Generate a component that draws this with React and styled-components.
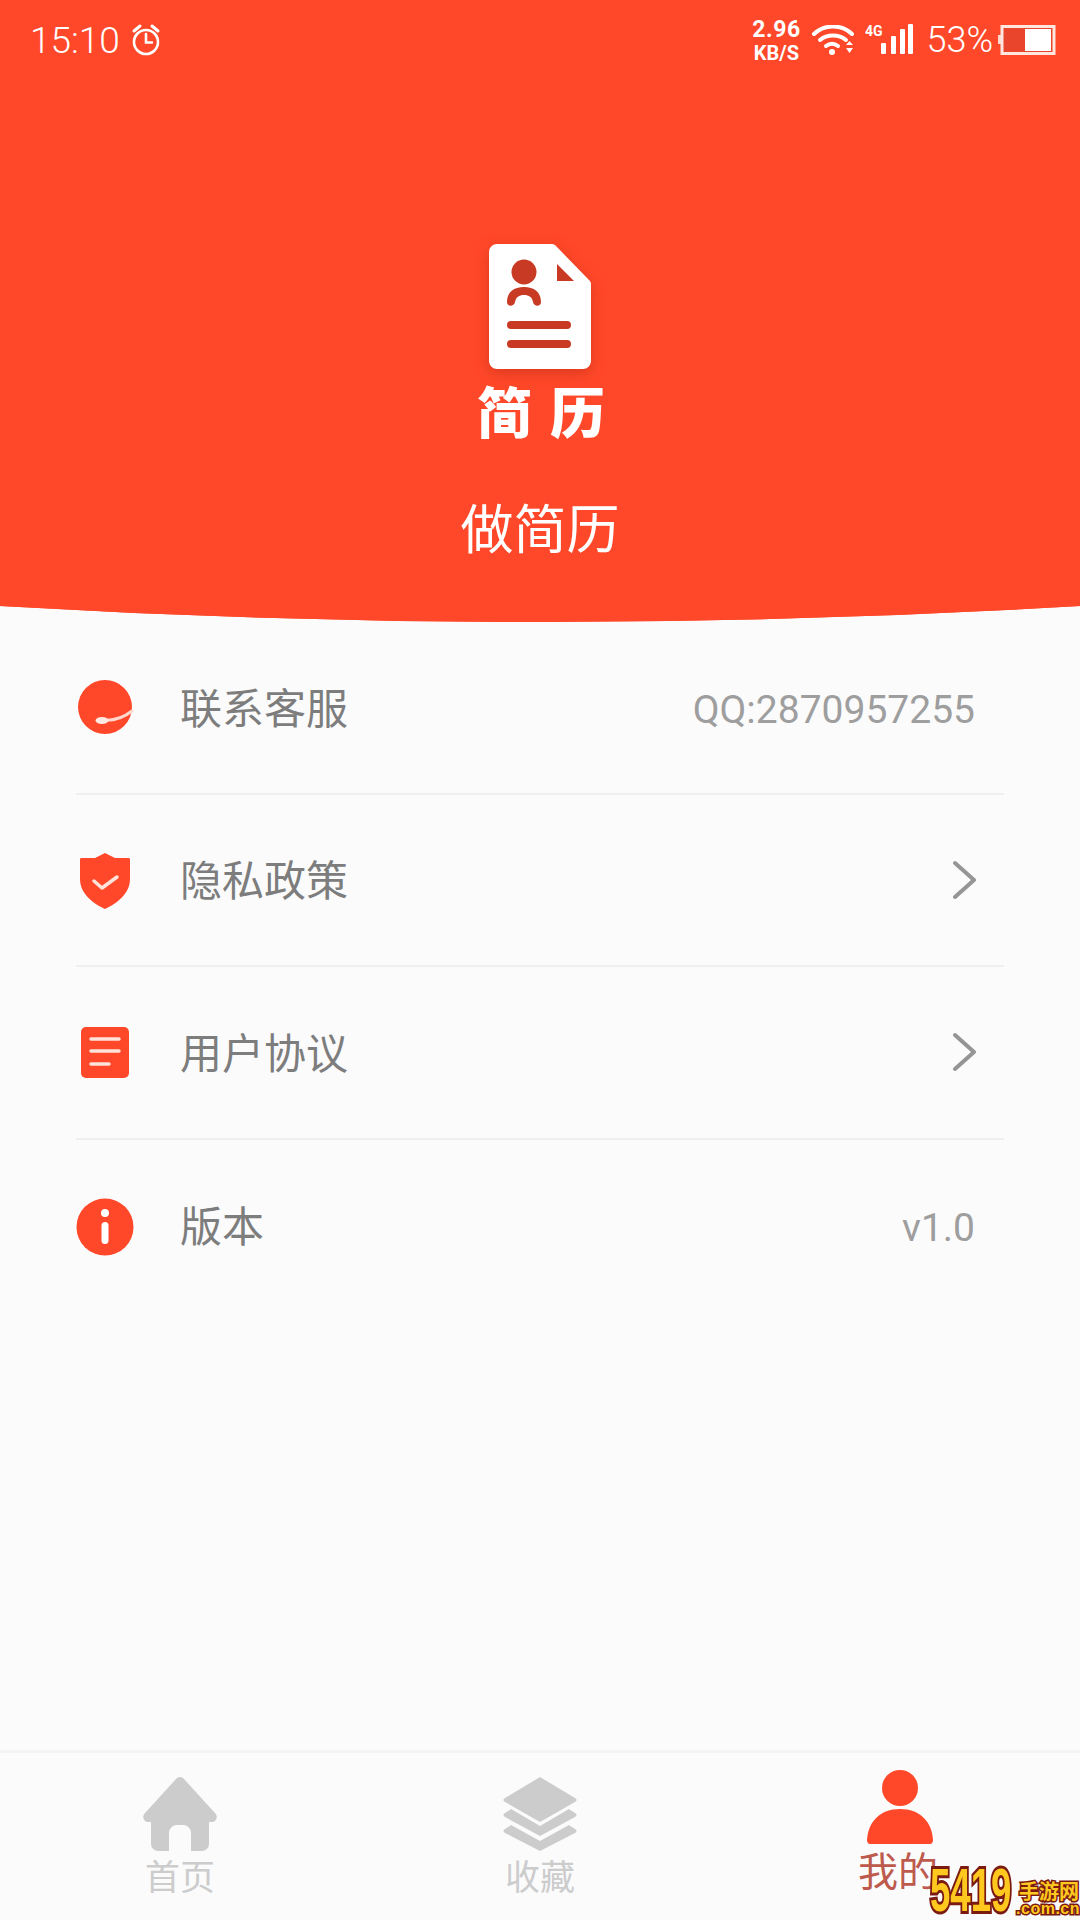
import React from "react";
import styled, { createGlobalStyle } from "styled-components";

const RED = "#ff4829";
const DARK = "#c93a25";

const GlobalStyle = createGlobalStyle`
  html, body { margin: 0; padding: 0; background: #fbfbfc; }
  * { box-sizing: border-box; }
`;

const Page = styled.div`
  position: relative;
  width: 1080px;
  height: 1920px;
  overflow: hidden;
  display: flex;
  flex-direction: column;
  background: #fbfbfc;
  font-family: "Noto Sans CJK SC", "Roboto", sans-serif;
`;

const Header = styled.header`
  position: relative;
  height: 622px;
  flex: none;
  display: flex;
  flex-direction: column;
  align-items: center;
  background: ${RED};
  color: #fff;
`;

const Curve = styled.svg`
  position: absolute;
  left: 0;
  bottom: 0;
  width: 1080px;
  height: 16px;
  display: block;
`;

const StatusBar = styled.div`
  width: 100%;
  height: 80px;
  padding: 0 24px 0 30px;
  display: flex;
  align-items: center;
  justify-content: space-between;
  font-family: "Roboto", sans-serif;
  font-weight: 300;
`;

const StatusGroup = styled.div`
  display: flex;
  align-items: center;
`;

const Clock = styled.span`
  font-size: 37px;
  margin-right: 11px;
`;

const Speed = styled.div`
  display: flex;
  flex-direction: column;
  align-items: center;
  gap: 3px;
  width: 48px;
  font-weight: 700;
  line-height: 1;
  margin-right: 11px;
`;

const SpeedValue = styled.span`
  font-size: 23px;
  line-height: 22px;
  letter-spacing: 0.5px;
`;

const SpeedUnit = styled.span`
  font-size: 20px;
  line-height: 18px;
`;

const Battery = styled.span`
  font-size: 36px;
  margin: 0 5px 0 11px;
`;

const Wifi = styled.svg`
  margin-right: 10px;
`;

const Logo = styled.svg`
  margin-top: 164px;
  filter: drop-shadow(0 4px 7px rgba(150, 30, 10, 0.35));
`;

const LogoName = styled.div`
  margin-top: 5px;
  padding-left: 20px;
  font-size: 55px;
  line-height: 70px;
  font-weight: 900;
  letter-spacing: 18px;
  font-family: "Noto Sans CJK SC", serif;
`;

const Title = styled.div`
  margin-top: 46px;
  font-size: 53px;
  line-height: 72px;
`;

const List = styled.div`
  flex: 1;
  padding: 0 76px;
`;

const Row = styled.div`
  height: 172.5px;
  display: flex;
  align-items: center;
  border-bottom: ${(p) => (p.$last ? "none" : "2px solid #efeff0")};
`;

const IconSlot = styled.div`
  width: 105px;
  flex: none;
  display: flex;
  justify-content: flex-start;
  margin-top: 2px;
`;

const Label = styled.span`
  flex: 1;
  font-size: 42px;
  color: #7d7d7d;
  line-height: 1;
  margin-top: -3px;
  margin-left: -1px;
`;

const Value = styled.span`
  font-family: "Roboto", sans-serif;
  font-size: 39px;
  color: #9e9e9e;
  margin-right: 29px;
  margin-top: 5px;
`;

const Arrow = styled.svg`
  margin-right: 28px;
`;

const TabBar = styled.nav`
  height: 170px;
  flex: none;
  display: grid;
  grid-template-columns: 360px 360px 360px;
  border-top: 3px solid #f4f4f5;
  background: #fbfbfc;
`;

const Tab = styled.div`
  display: flex;
  flex-direction: column;
  align-items: center;
  padding-top: ${(p) => (p.$active ? "17px" : "24px")};
  color: ${(p) => (p.$active ? "#bd5a4d" : "#cccccc")};
`;

const TabLabel = styled.span`
  font-size: ${(p) => (p.$active ? "40px" : "35px")};
  line-height: 44px;
  margin-top: ${(p) => (p.$active ? "3px" : "2px")};
  margin-right: ${(p) => (p.$active ? "4px" : "0")};
`;

const Watermark = styled.div`
  position: absolute;
  right: 0;
  bottom: 0;
  width: 152px;
  height: 68px;
  font-family: "Liberation Sans", sans-serif;
  color: #ffc81e;
`;

const WaterNumber = styled.span`
  position: absolute;
  left: 2px;
  top: 6px;
  font-size: 62px;
  font-weight: 700;
  line-height: 64px;
  transform: scaleX(0.59);
  transform-origin: left center;
  -webkit-text-stroke: 6px #7a1a10;
  paint-order: stroke fill;
`;

const WaterName = styled.span`
  position: absolute;
  right: 1px;
  top: 27px;
  font-family: "Noto Sans CJK SC", sans-serif;
  font-size: 20px;
  font-weight: 700;
  line-height: 24px;
  -webkit-text-stroke: 3px #7a1a10;
  paint-order: stroke fill;
`;

const WaterDomain = styled.span`
  position: absolute;
  right: 0;
  top: 46px;
  font-size: 16px;
  font-weight: 700;
  line-height: 22px;
  letter-spacing: 0.5px;
  -webkit-text-stroke: 3px #7a1a10;
  paint-order: stroke fill;
`;

const AlarmIcon = () => (
  <svg width="30" height="34" viewBox="0 0 30 34" fill="none" stroke="#fff" strokeWidth="2.6" strokeLinecap="round">
    <circle cx="15" cy="19" r="12" />
    <path d="M15 11v8.500h6" />
    <path d="M3 8l6-5M27 8l-6-5" strokeWidth="3" />
  </svg>
);

const WifiIcon = () => (
  <Wifi width="44" height="30" viewBox="0 0 44 30" fill="none" stroke="#fff" strokeLinecap="round">
    <path d="M3 9C13-1 31-1 41 9" strokeWidth="4" />
    <path d="M9 15c7-6 19-6 26 0" strokeWidth="4" />
    <path d="M15 21c4-3 8-3 12 0" strokeWidth="4" />
    <circle cx="21" cy="27" r="3" fill="#fff" stroke="none" />
    <path d="M35 20l3.500-4 3.500 4zM35 23h7l-3.500 5z" fill="#fff" stroke="none" />
  </Wifi>
);

const SignalIcon = () => (
  <svg width="50" height="32" viewBox="0 0 50 32">
    <text x="0" y="12" fill="#fff" fontFamily="Roboto, sans-serif" fontSize="14" fontWeight="700">4G</text>
    <rect x="16" y="19" width="5" height="11" rx="1" fill="#fff" />
    <rect x="26" y="12" width="5" height="18" rx="1" fill="#fff" />
    <rect x="35" y="5" width="5" height="25" rx="1" fill="#fff" />
    <rect x="43" y="0" width="5" height="30" rx="1" fill="#fff" />
  </svg>
);

const BatteryIcon = () => (
  <svg width="58" height="30" viewBox="0 0 58 30">
    <rect x="0" y="10" width="3" height="9" fill="#ffd9cf" />
    <rect x="4" y="1.500" width="52" height="27" fill="#e8452c" stroke="#ffe6df" strokeWidth="3" />
    <rect x="27" y="4" width="26" height="22" fill="#fff" />
  </svg>
);

const ResumeLogo = () => (
  <Logo width="102" height="125" viewBox="0 0 102 125">
    <path d="M8 0H63c2 0 3 1 4 2l33 34c1 1 2 2 2 4V117a8 8 0 0 1-8 8H8a8 8 0 0 1-8-8V8a8 8 0 0 1 8-8z" fill="#fff" />
    <path d="M68 20L85 37H68z" fill={DARK} />
    <circle cx="35" cy="28" r="12.500" fill={DARK} />
    <path d="M18 58c0-10 7-15 17-15s17 5 17 15c0 5-7 5-8 0-1-5-4-7-9-7s-8 2-9 7c-1 5-8 5-8 0z" fill={DARK} />
    <path d="M22 81H78M22 100H78" stroke={DARK} strokeWidth="8" strokeLinecap="round" />
  </Logo>
);

const ServiceIcon = () => (
  <svg width="58" height="58" viewBox="0 0 58 58">
    <circle cx="29" cy="28" r="27" fill={RED} />
    <path d="M27 41c10 1 20-2 29-9" fill="none" stroke="#ffd9cf" strokeWidth="3" strokeLinecap="round" />
    <ellipse cx="26" cy="41.500" rx="6.500" ry="3.500" fill="#ffe9e3" />
  </svg>
);

const ShieldIcon = () => (
  <svg width="58" height="58" viewBox="0 0 58 58">
    <path d="M29 1l10 5h14a3 3 0 0 1 1 1v20c0 14-12 24-25 30C16 51 4 41 4 27V7a3 3 0 0 1 1-1h14z" fill={RED} />
    <path d="M18 29l8 7 15-11" fill="none" stroke="#ffe3da" strokeWidth="3.500" strokeLinecap="round" strokeLinejoin="round" />
  </svg>
);

const DocIcon = () => (
  <svg width="58" height="58" viewBox="0 0 58 58">
    <rect x="5" y="3" width="48" height="51" rx="5" fill={RED} />
    <path d="M15 15H43M15 27H43M15 40H33" stroke="#ffe3da" strokeWidth="3.500" strokeLinecap="round" />
  </svg>
);

const InfoIcon = () => (
  <svg width="58" height="58" viewBox="0 0 58 58">
    <circle cx="29" cy="29" r="28.500" fill={RED} />
    <circle cx="29" cy="15" r="4" fill="#fff" />
    <rect x="25.500" y="24" width="7" height="22" rx="3.500" fill="#fff" />
  </svg>
);

const ChevronIcon = () => (
  <Arrow width="24" height="40" viewBox="0 0 24 40" fill="none" stroke="#959595" strokeWidth="4" strokeLinecap="round" strokeLinejoin="round">
    <path d="M3 3L22 20L3 37" />
  </Arrow>
);

const HomeIcon = () => (
  <svg width="74" height="74" viewBox="0 0 74 74">
    <path d="M37 0c2 0 3 1 4 2l31 34c3 3 2 8-2 9h-4v22a7 7 0 0 1-7 7H48V56a8 8 0 0 0-8-8h-6a8 8 0 0 0-8 8v18H15a7 7 0 0 1-7-7V45H4c-4-1-5-6-2-9L33 2c1-1 2-2 4-2z" fill="#cccccc" />
  </svg>
);

const LayersIcon = () => (
  <svg width="74" height="74" viewBox="0 0 74 74" fill="#cccccc">
    <path d="M37 0l35 21c2 1 2 3 0 4L37 45 2 25c-2-1-2-3 0-4z" />
    <path d="M8 32l29 17 29-17 6 4c2 1 2 3 0 4L37 59 2 40c-2-1-2-3 0-4z" />
    <path d="M8 48l29 16 29-16 6 4c2 1 2 3 0 4L37 74 2 56c-2-1-2-3 0-4z" />
  </svg>
);

const UserIcon = () => (
  <svg width="66" height="74" viewBox="0 0 66 74" fill={RED}>
    <ellipse cx="33" cy="18" rx="18" ry="18" />
    <path d="M33 39c20 0 32 13 33 31 0 2-1 4-3 4H3c-2 0-3-2-3-4 1-18 13-31 33-31z" />
  </svg>
);

const rows = [
  { label: "联系客服", value: "QQ:2870957255", icon: <ServiceIcon /> },
  { label: "隐私政策", arrow: true, icon: <ShieldIcon /> },
  { label: "用户协议", arrow: true, icon: <DocIcon /> },
  { label: "版本", value: "v1.0", icon: <InfoIcon />, last: true },
];

export default function App() {
  return (
    <Page>
      <GlobalStyle />
      <Header>
        <StatusBar>
          <StatusGroup>
            <Clock>15:10</Clock>
            <AlarmIcon />
          </StatusGroup>
          <StatusGroup>
            <Speed>
              <SpeedValue>2.96</SpeedValue>
              <SpeedUnit>KB/S</SpeedUnit>
            </Speed>
            <WifiIcon />
            <SignalIcon />
            <Battery>53%</Battery>
            <BatteryIcon />
          </StatusGroup>
        </StatusBar>
        <ResumeLogo />
        <LogoName>简历</LogoName>
        <Title>做简历</Title>
        <Curve viewBox="0 0 1080 16" preserveAspectRatio="none">
          <path d="M0 0Q540 32 1080 0V16H0z" fill="#fbfbfc" />
          <path d="M0 0Q540 32 1080 0z" fill={RED} />
        </Curve>
      </Header>
      <List>
        {rows.map((r) => (
          <Row key={r.label} $last={r.last}>
            <IconSlot>{r.icon}</IconSlot>
            <Label>{r.label}</Label>
            {r.value && <Value>{r.value}</Value>}
            {r.arrow && <ChevronIcon />}
          </Row>
        ))}
      </List>
      <TabBar>
        <Tab>
          <HomeIcon />
          <TabLabel>首页</TabLabel>
        </Tab>
        <Tab>
          <LayersIcon />
          <TabLabel>收藏</TabLabel>
        </Tab>
        <Tab $active>
          <UserIcon />
          <TabLabel $active>我的</TabLabel>
        </Tab>
      </TabBar>
      <Watermark>
        <WaterNumber>5419</WaterNumber>
        <WaterName>手游网</WaterName>
        <WaterDomain>.com.cn</WaterDomain>
      </Watermark>
    </Page>
  );
}
